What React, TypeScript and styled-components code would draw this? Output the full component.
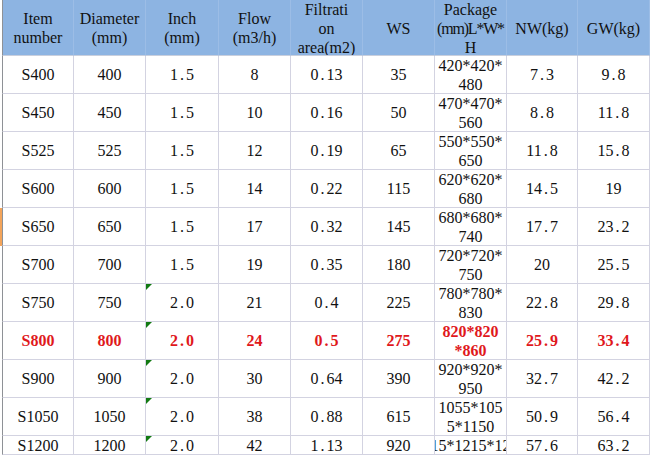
import React from "react"
import styled, { createGlobalStyle, css } from "styled-components"

interface Product {
  item: string
  diameter: string
  inch: string
  flow: string
  area: string
  ws: string
  pack: string[]
  nw: string
  gw: string
}

const products: Product[] = [
  { item: "S400", diameter: "400", inch: "1.5", flow: "8", area: "0.13", ws: "35", pack: ["420*420*", "480"], nw: "7.3", gw: "9.8" },
  { item: "S450", diameter: "450", inch: "1.5", flow: "10", area: "0.16", ws: "50", pack: ["470*470*", "560"], nw: "8.8", gw: "11.8" },
  { item: "S525", diameter: "525", inch: "1.5", flow: "12", area: "0.19", ws: "65", pack: ["550*550*", "650"], nw: "11.8", gw: "15.8" },
  { item: "S600", diameter: "600", inch: "1.5", flow: "14", area: "0.22", ws: "115", pack: ["620*620*", "680"], nw: "14.5", gw: "19" },
  { item: "S650", diameter: "650", inch: "1.5", flow: "17", area: "0.32", ws: "145", pack: ["680*680*", "740"], nw: "17.7", gw: "23.2" },
  { item: "S700", diameter: "700", inch: "1.5", flow: "19", area: "0.35", ws: "180", pack: ["720*720*", "750"], nw: "20", gw: "25.5" },
  { item: "S750", diameter: "750", inch: "2.0", flow: "21", area: "0.4", ws: "225", pack: ["780*780*", "830"], nw: "22.8", gw: "29.8" },
  { item: "S800", diameter: "800", inch: "2.0", flow: "24", area: "0.5", ws: "275", pack: ["820*820", "*860"], nw: "25.9", gw: "33.4" },
  { item: "S900", diameter: "900", inch: "2.0", flow: "30", area: "0.64", ws: "390", pack: ["920*920*", "950"], nw: "32.7", gw: "42.2" },
  { item: "S1050", diameter: "1050", inch: "2.0", flow: "38", area: "0.88", ws: "615", pack: ["1055*105", "5*1150"], nw: "50.9", gw: "56.4" },
  { item: "S1200", diameter: "1200", inch: "2.0", flow: "42", area: "1.13", ws: "920", pack: ["1215*1215*1200"], nw: "57.6", gw: "63.2" },
]

const headers: string[][] = [
  ["Item", "number"],
  ["Diameter", "(mm)"],
  ["Inch", "(mm)"],
  ["Flow", "(m3/h)"],
  ["Filtrati", "on", "area(m2)"],
  ["WS"],
  ["Package", "(mm)L*W*", "H"],
  ["NW(kg)"],
  ["GW(kg)"],
]

// decimal points take a full half-width cell, like the sheet font
const num = (value: string) => {
  const parts = value.split(".")
  if (parts.length < 2) return value
  return (
    <>
      {parts[0]}
      <Dot>.</Dot>
      {parts[1]}
    </>
  )
}

const App = () => {
  return (
    <>
      <GlobalStyle />
      <Sheet>
        <HeaderRow>
          <Edge />
          {headers.map((lines, i) => (
            <HeadCell key={i}>
              <span>
                {lines.map((line, j) => (
                  <Line key={j} $tight={line.length > 7 && line.includes("*")}>
                    {line}
                  </Line>
                ))}
              </span>
            </HeadCell>
          ))}
        </HeaderRow>
        {products.map((p, idx) => {
          const red = p.item === "S800"
          const last = idx === products.length - 1
          const marked = p.inch === "2.0"
          return (
            <Row key={p.item} $last={last}>
              <Edge $active={p.item === "S650"} />
              <Cell $red={red} $first>{p.item}</Cell>
              <Cell $red={red}>{p.diameter}</Cell>
              <Cell $red={red} $mark={marked}>{num(p.inch)}</Cell>
              <Cell $red={red}>{p.flow}</Cell>
              <Cell $red={red}>{num(p.area)}</Cell>
              <Cell $red={red}>{p.ws}</Cell>
              <Cell $red={red}>
                <span>
                  {p.pack.map((line, j) => (
                    <Line key={j}>{line}</Line>
                  ))}
                </span>
              </Cell>
              <Cell $red={red}>{num(p.nw)}</Cell>
              <Cell $red={red}>{num(p.gw)}</Cell>
            </Row>
          )
        })}
      </Sheet>
    </>
  )
}

const GlobalStyle = createGlobalStyle`
  html, body {
    margin: 0;
    padding: 0;
    background: #fff;
    overflow: hidden;
  }
  body {
    font-family: "Liberation Serif", "Times New Roman", serif;
    font-size: 16px;
    color: #111;
  }
`

const Sheet = styled.div`
  width: 650px;
  height: 456px;
  overflow: hidden;
`

const columns = "2px 72px 72px 73px 72px 72px 72px 72px 71px 72px"

const HeaderRow = styled.div`
  display: grid;
  grid-template-columns: ${columns};
  height: 56px;
  background: #8db4e2;
`

const Row = styled.div<{ $last?: boolean }>`
  display: grid;
  grid-template-columns: ${columns};
  height: ${p => (p.$last ? "19px" : "38px")};
`

const Edge = styled.div<{ $active?: boolean }>`
  background: ${p => (p.$active ? "#f3a45a" : "#fff")};
  border-bottom: 1px solid ${p => (p.$active ? "#f3a45a" : "#fff")};
`

const cellBase = css`
  box-sizing: border-box;
  display: flex;
  align-items: center;
  justify-content: center;
  text-align: center;
  line-height: 19px;
  white-space: nowrap;
  overflow: hidden;
  border-right: 1px solid #d3d3e1;
  border-bottom: 1px solid #d3d3e1;
`

const HeadCell = styled.div`
  ${cellBase}
  border-right-color: #9cbde6;
  border-bottom-color: #c9cfdd;
  padding-top: 1px;

  &:nth-child(2) {
    border-left: 1px solid #8e9196;
  }
`

const Cell = styled.div<{ $red?: boolean; $first?: boolean; $mark?: boolean }>`
  ${cellBase}
  position: relative;
  border-left: ${p => (p.$first ? "1px solid #8e9196" : "none")};
  color: ${p => (p.$red ? "#e0181c" : "#111")};
  font-weight: ${p => (p.$red ? 700 : 400)};

  ${p =>
    p.$mark &&
    css`
      &::before {
        content: "";
        position: absolute;
        top: 0;
        left: 0;
        border-top: 6px solid #127a12;
        border-right: 6px solid transparent;
      }
    `}
`

const Line = styled.span<{ $tight?: boolean }>`
  display: block;
  letter-spacing: ${p => (p.$tight ? "-1.2px" : "0")};
`

const Dot = styled.span`
  display: inline-block;
  width: 8px;
  text-align: center;
`

export default App
